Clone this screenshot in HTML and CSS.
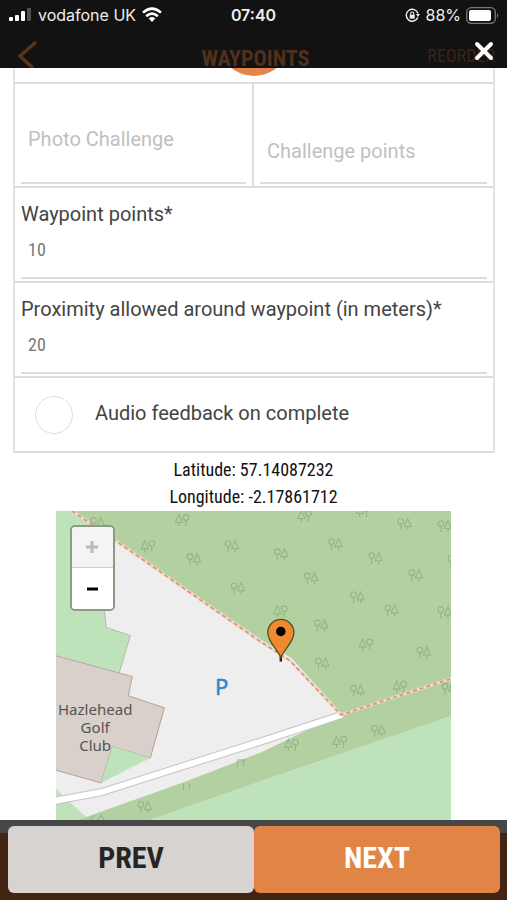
FILE: index.html
```html
<!DOCTYPE html>
<html lang="en">
<head>
<meta charset="utf-8">
<meta name="viewport" content="width=device-width, initial-scale=1">
<title>Waypoints</title>
<link rel="stylesheet" href="styles.css">
</head>
<body>
<header class="top">
  <div class="status">
    <div class="status-left">
      <svg width="24" height="14" viewBox="0 0 24 14" fill="#fff"><rect x="1" y="9" width="4" height="4" rx="1"/><rect x="7" y="7" width="4" height="6" rx="1"/><rect x="13" y="3" width="4" height="10" rx="1"/><rect x="19" y="0" width="4" height="13" rx="1" fill="#505050"/></svg>
      <span>vodafone UK</span>
      <svg width="20" height="16" viewBox="0 0 20 16" fill="none" stroke="#fff" stroke-width="2.6"><path d="M1 5.6Q10-2.4 19 5.6M4.2 9.2Q10 4 15.8 9.2"/><path d="M6.7 11.5Q10 8.700 13.300 11.500L10 15Z" fill="#fff" stroke="none"/></svg>
    </div>
    <time class="clock">07:40</time>
    <div class="status-right">
      <svg width="15" height="15" viewBox="0 0 15 15" fill="none" stroke="#eee" stroke-width="1.4"><path d="M12.800 9.500A6 6 0 1 1 13 5.500"/><path d="M11 6h4l-2 3z" fill="#eee" stroke="none"/><rect x="4.700" y="6.800" width="5" height="3.800" fill="#eee" stroke="none"/><path d="M5.700 7V5.500a1.500 1.500 0 0 1 3 0V7" stroke-width="1.100"/></svg>
      <span>88%</span>
      <svg width="33" height="17" viewBox="0 0 33 17"><rect x=".7" y=".7" width="28.600" height="15.600" rx="4.500" fill="none" stroke="#777" stroke-width="1.300"/><rect x="3" y="3" width="22" height="11" rx="2" fill="#fff"/><path d="M31 6q2.500 2.500 0 5z" fill="#777"/></svg>
    </div>
  </div>
  <nav class="nav">
    <button class="back" aria-label="Back"><svg width="22" height="28" viewBox="0 0 22 28"><path d="M20 2 4 16l13 12" fill="none" stroke="#5a341b" stroke-width="3.500"/></svg></button>
    <h1>WAYPOINTS</h1>
    <button class="reorder">REORDER</button>
    <button class="close" aria-label="Close"><svg width="20" height="20" viewBox="0 0 20 20"><path d="m3 3 14 14M17 3 3 17" stroke="#fff" stroke-width="4" stroke-linecap="round"/></svg></button>
  </nav>
</header>
<main>
  <form class="form">
    <div class="row stub"><span class="disc"></span></div>
    <div class="row pair">
      <div class="cell"><input class="photo" type="text" placeholder="Photo Challenge" aria-label="Photo Challenge"></div>
      <div class="cell"><input class="points" type="text" placeholder="Challenge points" aria-label="Challenge points"></div>
    </div>
    <div class="row field"><label for="wp">Waypoint points*</label><input id="wp" type="text" value="10"></div>
    <div class="row field"><label for="prox">Proximity allowed around waypoint (in meters)*</label><input id="prox" type="text" value="20"></div>
    <div class="row check"><input id="audio" type="checkbox"><label for="audio">Audio feedback on complete</label></div>
  </form>
  <p class="coords">Latitude: 57.14087232<br>Longitude: -2.17861712</p>
  <section class="map" aria-label="Map">
    <svg class="tiles" viewBox="0 0 394 308">
      <defs>
        <g id="tree" fill="none" stroke="#93b485" stroke-width="1.100"><circle cx="-3.500" cy="-2.500" r="2.800"/><path d="M-3.500 0v6M3.500-5.500 0 2.500h7zM3.500 2.500V6"/></g>
        <g id="eert" fill="none" stroke="#93b485" stroke-width="1.100"><circle cx="3.500" cy="-2.500" r="2.800"/><path d="M3.500 0v6M-3.500-5.500-7 2.500h7zM-3.500 2.500V6"/></g>
      </defs>
      <path fill="#efeeee" d="M0 0h394v308H0z"/>
      <path fill="#bee3ba" d="M0 0h16L48 22V98l2 18 24 8-11 37L0 144zM0 277l30 28-5 3H0zM93 308l100-35 201-69v104z"/>
      <path d="M48 98l2 18 24 8-11 37" fill="none" stroke="#b3bda5"/>
      <path fill="#b3d0a1" d="M16 0h378v204L193 273 93 308H22l8-3 98-35 75-29 79-38 2-2-49-54-31-19L60 30z"/>
      <path d="M181 249v6m6-7v6m-7-6h9M127 272v6m6-7v6M35 308q0-5 4-4m2 4 4-5 3 5" fill="none" stroke="#93b485"/>
      <path fill="#d8d0ca" stroke="#b9a197" d="M-1 144 76 165l-4 19 36 12-14 50-38-11-11 36-46-13z"/>
      <path fill="#bee3ba" d="M56 235l38 11-49 25z"/>
      <g fill="none"><path d="M-2 289 46 280l9-3 148-47 82-27" stroke="#c5c4c4" stroke-width="8"/><path d="M-2 289 46 280l9-3 148-47 82-27" stroke="#fff" stroke-width="6"/>
      <path d="M16 0 60 30l142 99 31 20 51 54 110-36" stroke="#e4e0cc" stroke-width="3"/><path d="M16 0 60 30l142 99 31 20 51 54 110-36" stroke="#ec8c7c" stroke-width="1.800" stroke-dasharray="4 3"/></g>
      <use href="#tree" x="41" y="12"/><use href="#eert" x="126" y="9"/><use href="#eert" x="92" y="35"/><use href="#tree" x="137" y="48"/><use href="#tree" x="175" y="35"/><use href="#tree" x="181" y="77"/>
      <use href="#eert" x="248" y="5"/><use href="#eert" x="306" y="0"/><use href="#tree" x="347" y="13"/><use href="#tree" x="387" y="15"/><use href="#tree" x="224" y="43"/><use href="#tree" x="278" y="33"/><use href="#tree" x="318" y="47"/><use href="#tree" x="254" y="67"/><use href="#tree" x="358" y="64"/><use href="#tree" x="397" y="50"/><use href="#tree" x="300" y="86"/><use href="#tree" x="334" y="99"/><use href="#tree" x="387" y="101"/><use href="#eert" x="224" y="100"/><use href="#tree" x="264" y="114"/><use href="#eert" x="309" y="133"/><use href="#tree" x="366" y="141"/><use href="#tree" x="265" y="152"/>
      <use href="#tree" x="300" y="179"/><use href="#eert" x="343" y="175"/><use href="#tree" x="391" y="177"/><use href="#eert" x="235" y="233"/><use href="#eert" x="283" y="230"/><use href="#tree" x="321" y="219"/><use href="#tree" x="88" y="295"/>
      <g class="place"><text x="39" y="203">Hazlehead</text><text x="39" y="221">Golf</text><text x="39" y="239">Club</text></g>
      <text class="parking" x="165" y="183">P</text>
      <path d="M224 142v8" stroke="#222" stroke-width="2.500"/>
      <path d="M224 146C221 138 211 131 211 121a13 13 0 0 1 26 0C237 131 227 138 224 146Z" fill="#ee8b31" stroke="#54511e" stroke-width="1.300"/><circle cx="224" cy="120" r="4.700"/>
    </svg>
    <div class="zoom"><button disabled aria-label="Zoom in"><svg width="14" height="14" viewBox="0 0 14 14"><path d="M7 1v12M1 7h12" stroke="#bbb" stroke-width="3"/></svg></button><button aria-label="Zoom out"><svg width="14" height="14" viewBox="0 0 14 14"><path d="M2 7h11" stroke="#000" stroke-width="3"/></svg></button></div>
  </section>
</main>
<footer class="actions"><button class="prev">PREV</button><button class="next">NEXT</button></footer>
</body>
</html>
```
FILE: styles.css
```css
* { box-sizing: border-box; }
body {
  margin: 0;
  min-height: 100vh;
  display: flex;
  flex-direction: column;
  background: #fff;
  color: #444;
  font-family: Roboto, "Liberation Sans", sans-serif;
}
button { border: 0; padding: 0; background: none; font: inherit; }
svg { display: block; }

.top { position: relative; z-index: 1; background: #121212; }
.status {
  display: grid;
  grid-template-columns: 1fr auto 1fr;
  align-items: center;
  height: 30px;
  padding: 0 8px;
  color: #eee;
  font: 16px/20px Inter, sans-serif;
}
.status-left, .status-right { display: flex; align-items: center; gap: 6px; }
.status-right { justify-content: flex-end; gap: 5px; }
.clock { font-weight: 600; }
.nav {
  display: grid;
  grid-template-columns: 1fr auto 1fr;
  align-items: end;
  height: 38px;
  padding: 0 12px 0 16px;
  color: #50301c;
  font-family: "Liberation Sans Narrow", "Roboto Condensed", "Liberation Sans", sans-serif;
}
.back { justify-self: start; }
.nav h1 { margin: 0; font-size: 22px; line-height: 18px; }
.reorder { justify-self: end; padding-bottom: 2px; font-size: 18px; line-height: 20px; color: #3b2316; }
.close { position: absolute; right: 13px; top: 41px; }

.form { margin: 0 12px 0 13px; border: solid #e3e3e3; border-width: 0 2px; }
.row { border-bottom: 2px solid #dcdcdc; }
.stub { position: relative; height: 16px; }
.disc {
  position: absolute;
  left: 50%;
  bottom: 6px;
  width: 72px;
  height: 72px;
  margin-left: -36px;
  border-radius: 50%;
  background: #e5854a;
}
.pair { display: grid; grid-template-columns: 1fr 1fr; height: 104px; }
.cell { display: flex; padding: 0 6px 2px; }
.cell:first-child { border-right: 2px solid #dcdcdc; }
.form input[type="text"] {
  width: 100%;
  border: 0;
  border-bottom: 2px solid #dcdcdc;
  padding: 0 7px;
  background: transparent;
  color: #777;
  font: 18px/24px "Roboto Condensed", "Liberation Sans Narrow", sans-serif;
}
.form .cell input[type="text"] { font: 20px/24px Roboto, sans-serif; }
.form .cell .photo { padding-top: 12px; }
.form .cell .points { padding-top: 36px; }
.form input::placeholder { color: #c0c0c0; opacity: 1; }
.field { display: flex; flex-direction: column; padding: 12px 6px 2px; height: 95px; font-size: 20px; line-height: 28px; }
.form .field input[type="text"] { flex: 1; padding-bottom: 6px; }
.check { display: flex; align-items: center; gap: 22px; height: 75px; padding: 0 20px; font-size: 20px; }
.check label { padding-bottom: 4px; }
.check input {
  appearance: none;
  width: 38px;
  height: 38px;
  margin: 0;
  border: 1px solid #ddd;
  border-radius: 50%;
}
.coords {
  margin: 3px 0 1px;
  text-align: center;
  color: #111;
  font: 18px/27px "Roboto Condensed", "Liberation Sans Narrow", sans-serif;
}

.map { position: relative; width: 78%; margin: 0 auto; }
.tiles { width: 100%; height: auto; }
.place { font: 15px "Noto Sans", sans-serif; fill: #555; text-anchor: middle; }
.parking { font: 22px "Noto Sans", sans-serif; fill: #2f87d2; stroke: #2f87d2; stroke-width: 0.5; text-anchor: middle; }
.zoom {
  position: absolute;
  left: 14px;
  top: 14px;
  border: 2px solid #8a9c85;
  border-radius: 5px;
  overflow: hidden;
}
.zoom button { display: grid; place-items: center; width: 41px; height: 41px; background: #fff; }
.zoom button:disabled { background: #f4f4f4; border-bottom: 1px solid #ccc; }

.actions {
  display: grid;
  grid-template-columns: 1fr 1fr;
  flex: 1;
  padding: 6px 7px 7px 8px;
  background: linear-gradient(#474747 13px, #432412 13px);
}
.actions button {
  padding-bottom: 4px;
  border-radius: 6px;
  font: bold 30px "Liberation Sans Narrow", "Roboto Condensed", "Liberation Sans", sans-serif;
}
.prev { background: #d6d3d1; color: #252525; }
.next { background: #e18546; color: #fff; }
```
